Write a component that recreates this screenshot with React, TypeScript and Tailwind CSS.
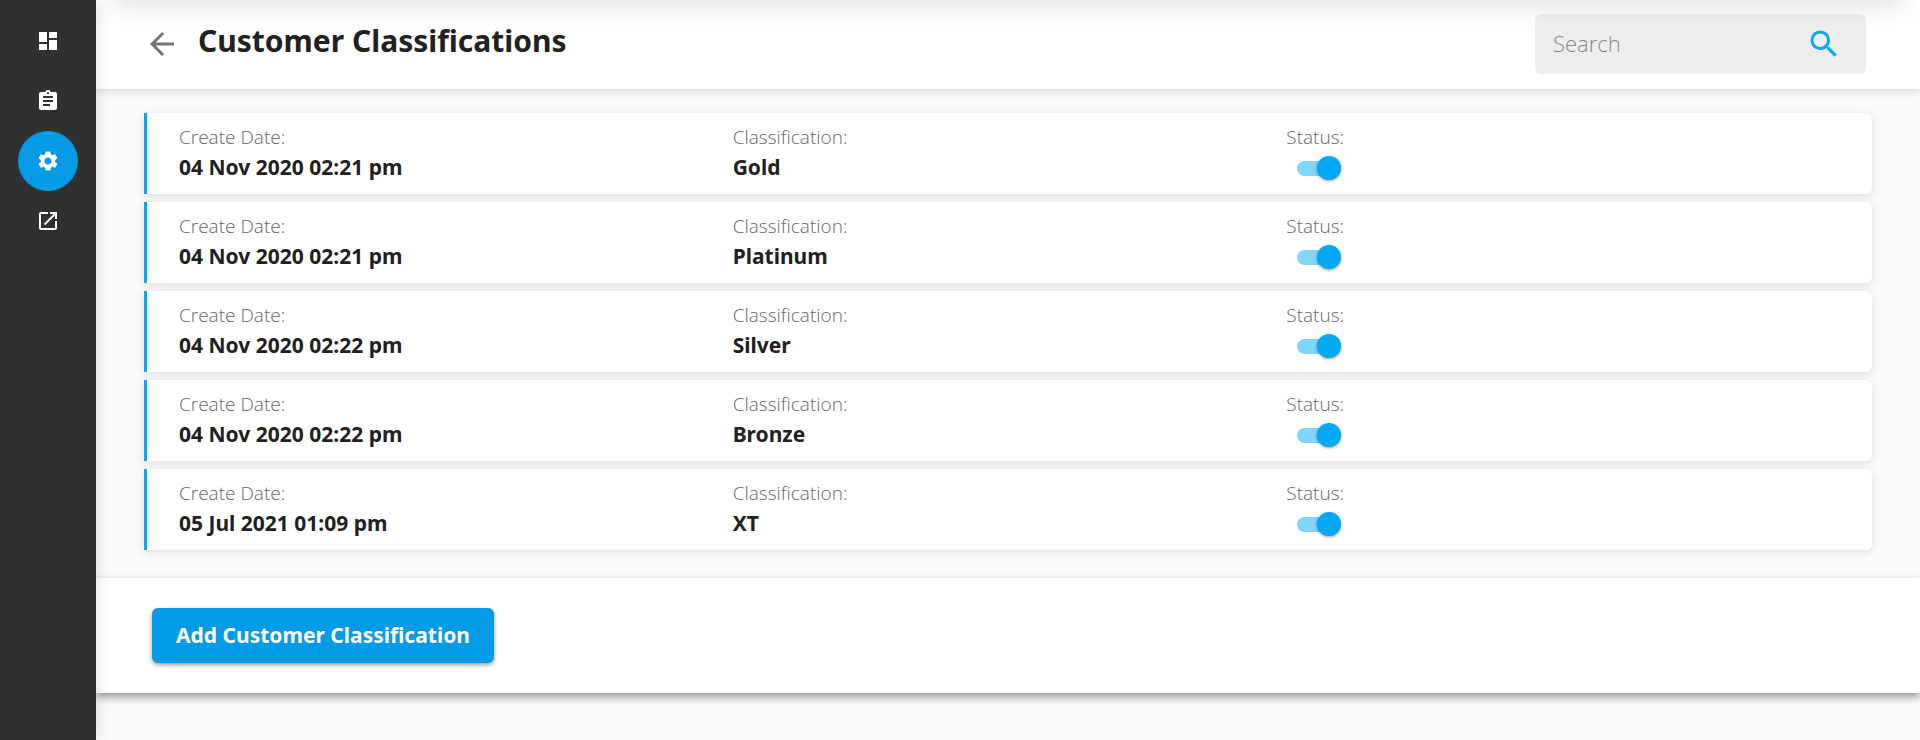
import {
  MdArrowBack,
  MdAssignment,
  MdDashboard,
  MdOpenInNew,
  MdSearch,
  MdSettings,
} from "react-icons/md";

const classifications = [
  { id: 1, createDate: "04 Nov 2020 02:21 pm", name: "Gold" },
  { id: 2, createDate: "04 Nov 2020 02:21 pm", name: "Platinum" },
  { id: 3, createDate: "04 Nov 2020 02:22 pm", name: "Silver" },
  { id: 4, createDate: "04 Nov 2020 02:22 pm", name: "Bronze" },
  { id: 5, createDate: "05 Jul 2021 01:09 pm", name: "XT" },
];

const navItems = [
  { label: "Dashboard", icon: MdDashboard },
  { label: "Orders", icon: MdAssignment },
  { label: "Settings", icon: MdSettings, active: true },
  { label: "Open store", icon: MdOpenInNew },
];

const styleLabel =
  "font-['Open_Sans',sans-serif] text-[19px] leading-6 font-light text-[#666]";
const styleValue = "text-[21px] leading-9 font-bold text-[#212121]";

function Sidebar() {
  return (
    <nav className="z-10 flex w-24 shrink-0 flex-col items-center bg-[#303030] pt-[11px] shadow-[0_0_14px_rgba(0,0,0,0.15)]">
      {navItems.map(({ label, icon: Icon, active }) => (
        <a
          key={label}
          href="#"
          aria-label={label}
          className={`flex h-[60px] w-[60px] items-center justify-center rounded-full text-white ${
            active ? "bg-[#039be5]" : ""
          }`}>
          <Icon className="size-6" />
        </a>
      ))}
    </nav>
  );
}

function Header() {
  return (
    <header className="flex h-[89px] items-start justify-between bg-white pr-[54px] pl-12 shadow-[0_2px_8px_rgba(0,0,0,0.15)]">
      <div className="flex items-start pt-[21px]">
        <button type="button" aria-label="Back" className="pt-[5px] text-[#757575]">
          <MdArrowBack className="size-9" />
        </button>
        <h1 className="pl-[18px] text-[30px] leading-10 font-bold text-[#212121]">
          Customer Classifications
        </h1>
      </div>
      <div className="mt-[14px] flex h-[60px] w-[331px] items-center rounded-md bg-[#eee] pr-6 pl-[18px]">
        <input
          type="text"
          aria-label="Search"
          placeholder="Search"
          className="min-w-0 flex-1 bg-transparent pb-[2px] font-['Open_Sans',sans-serif] text-[22px] font-light outline-none placeholder:text-[#888]"
        />
        <button type="button" aria-label="Search" className="text-[#03a9f4]">
          <MdSearch className="size-9" />
        </button>
      </div>
    </header>
  );
}

function StatusSwitch({ id }: { id: number }) {
  return (
    <label
      htmlFor={`status-${id}`}
      className="relative mt-[7px] ml-[11px] flex h-6 w-11 items-center">
      <input
        id={`status-${id}`}
        type="checkbox"
        role="switch"
        aria-label="Status"
        defaultChecked
        className="peer absolute inset-0 opacity-0"
      />
      <span className="h-[15px] w-full rounded-full bg-[#ccc] peer-checked:bg-[#81d4fa]"></span>
      <span className="absolute left-0 size-6 rounded-full bg-white shadow-[0_1px_3px_rgba(0,0,0,0.4)] peer-checked:left-5 peer-checked:bg-[#03a9f4]"></span>
    </label>
  );
}

export default function App() {
  return (
    <div className="flex min-h-screen bg-[#fafafa] font-['Noto_Sans','Open_Sans',sans-serif]">
      <Sidebar />
      <div className="relative flex min-w-0 flex-1 flex-col overflow-hidden">
        {/* shadow of the top bar */}
        <div className="pointer-events-none absolute inset-x-4 -top-4 h-4 shadow-[0_4px_24px_rgba(0,0,0,0.16)]"></div>
        <Header />
        <main className="flex flex-col gap-2 px-12 pt-6 pb-7">
          {classifications.map((item) => (
            <section
              key={item.id}
              className="grid h-[81px] grid-cols-3 rounded-r-md border-l-3 border-[#03a9f4] bg-white px-8 pt-3 shadow-[0_2px_8px_rgba(0,0,0,0.12)]">
              <div>
                <p className={styleLabel}>Create Date:</p>
                <p className={styleValue}>{item.createDate}</p>
              </div>
              <div>
                <p className={styleLabel}>Classification:</p>
                <p className={styleValue}>{item.name}</p>
              </div>
              <div>
                <p className={styleLabel}>Status:</p>
                <StatusSwitch id={item.id} />
              </div>
            </section>
          ))}
        </main>
        <footer className="bg-white px-14 py-[30px] shadow-[0_4px_8px_rgba(0,0,0,0.4)]">
          <button
            type="button"
            className="block h-[55px] rounded-md bg-[#039be5] px-6 text-[21px] font-bold text-white shadow-[0_2px_4px_rgba(0,0,0,0.4)]">
            Add Customer Classification
          </button>
        </footer>
      </div>
    </div>
  );
}
